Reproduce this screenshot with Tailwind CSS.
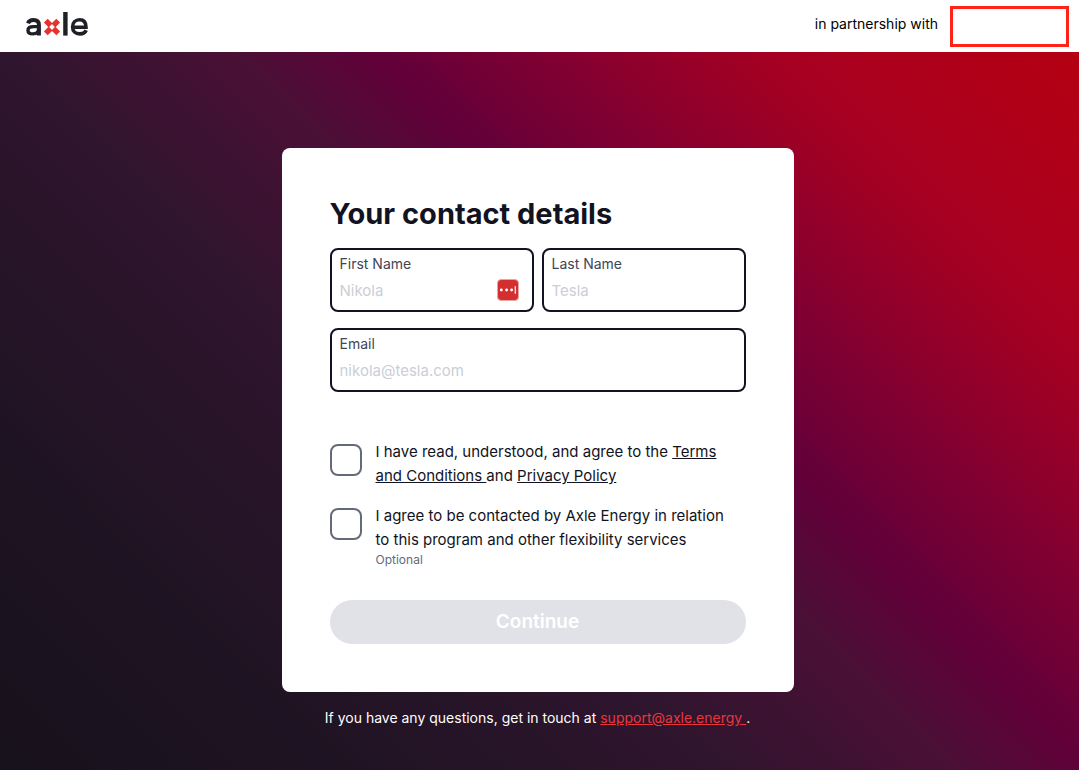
<!DOCTYPE html>
<html lang="en">
<head>
<meta charset="utf-8">
<meta name="viewport" content="width=device-width, initial-scale=1">
<title>Axle – Your contact details</title>
<script src="https://cdn.jsdelivr.net/npm/@tailwindcss/browser@4"></script>
</head>
<body class="flex min-h-screen flex-col font-['Inter',sans-serif] text-[#111322]">
<header class="flex h-13 items-center justify-between bg-white pr-2.5 pl-6.5 text-black">
  <a href="#" aria-label="axle" class="pb-1">
    <svg class="h-6 w-[62px]" viewBox="0 0 62 24" fill="none" stroke="#1f1f26" stroke-width="4">
      <path d="M2 11.300C2.800 8.900 4.600 8 7.500 8C11.100 8 12.900 9.600 12.900 12.800V23.600"/>
      <path d="M13 14.600H7.600C4 14.600 2 15.900 2 18.200C2 20.600 4 21.900 6.700 21.900C10.500 21.900 12.900 19.800 12.900 16" stroke-width="3.400"/>
      <path d="M39.400 0V23.600" stroke-width="4.400"/>
      <path d="M47 15.300H60C60 10.600 57.700 7.800 53.600 7.800C49.400 7.800 46.600 10.700 46.600 14.900C46.600 19.100 49.400 21.900 53.800 21.900C57 21.900 59.200 20.600 60.200 18.300" stroke-width="3.600"/>
      <path d="M19.800 8.700L24.600 13.500M32.200 8.700L27.400 13.500M19.800 21.300L24.600 16.500M32.200 21.300L27.400 16.500" stroke="#e6332e" stroke-width="5.400"/>
    </svg>
  </a>
  <div class="flex items-center gap-3">
    <p class="pb-1 text-sm">in partnership with</p>
    <div class="h-[41px] w-[119px] border-3 border-[#ff2318]"></div>
  </div>
</header>
<main class="flex flex-1 flex-col items-center bg-[linear-gradient(45deg,#18121c_0%,#1e1322_18%,#2f152e_40%,#4a1035_53%,#62003a_61%,#800032_70%,#9c0026_79%,#aa0020_85%,#b40012_100%)] pt-24 pr-7 pb-10 pl-6">
  <form class="w-full max-w-lg rounded-lg bg-white p-12">
    <h1 class="mb-4 text-[29px] leading-9 font-bold">Your contact details</h1>
    <div class="grid grid-cols-2 gap-x-2 gap-y-4">
      <div class="relative flex h-16 flex-col rounded-lg border-2 border-[#111322] px-2 pt-1">
        <label for="first" class="text-sm text-[#404656]">First Name</label>
        <input id="first" type="text" placeholder="Nikola" class="h-8 w-full bg-transparent text-[15px] outline-none placeholder:text-[#cbced6]">
        <svg class="absolute top-[29px] right-[13px] size-[22px]" viewBox="0 0 23 23" aria-hidden="true">
          <rect x="0.500" y="0.500" width="22" height="22" rx="4" fill="#d32f2f" stroke="#eba5a5"/>
          <g fill="#fff"><circle cx="4.500" cy="11.500" r="1.500"/><circle cx="10" cy="11.500" r="1.500"/><circle cx="15.300" cy="11.500" r="1.500"/><rect x="18.500" y="7.500" width="1.200" height="8"/></g>
        </svg>
      </div>
      <div class="flex h-16 flex-col rounded-lg border-2 border-[#111322] px-2 pt-1">
        <label for="last" class="text-sm text-[#404656]">Last Name</label>
        <input id="last" type="text" placeholder="Tesla" class="h-8 w-full bg-transparent text-[15px] outline-none placeholder:text-[#cbced6]">
      </div>
      <div class="col-span-2 flex h-16 flex-col rounded-lg border-2 border-[#111322] px-2 pt-1">
        <label for="email" class="text-sm text-[#404656]">Email</label>
        <input id="email" type="email" placeholder="nikola@tesla.com" class="h-8 w-full bg-transparent text-[15px] outline-none placeholder:text-[#cbced6]">
      </div>
    </div>
    <div class="mt-12 flex items-start gap-3.5">
      <input id="terms" type="checkbox" class="mt-1 size-8 shrink-0 appearance-none rounded-lg border-2 border-[#646a7a] checked:bg-[#111322]">
      <label for="terms" class="pr-2 text-[15px] leading-6">I have read, understood, and agree to the <a href="#" class="underline">Terms and Conditions </a>and <a href="#" class="underline">Privacy Policy</a></label>
    </div>
    <div class="mt-4 flex items-start gap-3.5">
      <input id="contact" type="checkbox" class="mt-1 size-8 shrink-0 appearance-none rounded-lg border-2 border-[#646a7a] checked:bg-[#111322]">
      <label for="contact" class="pr-2 text-[15px] leading-6">I agree to be contacted by Axle Energy in relation to this program and other flexibility services
        <span class="block text-xs text-[#646a7a]">Optional</span>
      </label>
    </div>
    <button type="submit" class="mt-8 h-11 w-full rounded-full bg-[#e1e2e8] text-[19px] font-semibold text-white">Continue</button>
  </form>
  <p class="mt-4 text-sm text-white">If you have any questions, get in touch at <a href="#" class="text-[#e6383c] underline">support@axle.energy </a>.</p>
</main>
</body>
</html>
